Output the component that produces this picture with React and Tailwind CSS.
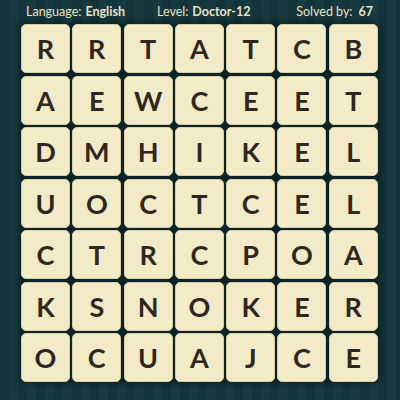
const rows = [
  'RRTATCB',
  'AEWCEET',
  'DMHIKEL',
  'UOCTCEL',
  'CTRCPOA',
  'KSNOKER',
  'OCUAJCE',
];

export default function App() {
  return (
    <div
      className="w-[400px] h-[400px] overflow-hidden bg-[repeating-linear-gradient(90deg,#13343a_0px,#13343a_9px,#173a3f_9px,#173a3f_18px)]"
      style={{ fontFamily: 'Lato, "Open Sans", sans-serif' }}
    >
      {/* HEADER */}
      <div className="h-[24px] flex items-center text-[12.5px] text-[#e9e3c3] pl-[26px] pr-[27px]">
        <div className="flex gap-[4px]">
          <span>Language:</span>
          <span className="font-bold">English</span>
        </div>
        <div className="flex gap-[4px] ml-[32px]">
          <span>Level:</span>
          <span className="font-bold">Doctor-12</span>
        </div>
        <div className="flex gap-[6px] ml-auto">
          <span>Solved by:</span>
          <span className="font-bold">67</span>
        </div>
      </div>

      {/* BOARD */}
      <div className="ml-[21px] w-fit bg-[#0b2226] rounded-[6px] shadow-[0_0_10px_rgba(0,0,0,0.55)]">
        <div className="grid grid-cols-7 gap-x-[2.3px] gap-y-[2.5px]">
          {rows.map((row, r) =>
            row.split('').map((ch, c) => (
              <Tile key={`${r}-${c}`} letter={ch} />
            ))
          )}
        </div>
      </div>
    </div>
  );
}

function Tile({ letter }) {
  return (
    <div className="w-[49px] h-[49px] rounded-[5px] bg-[#f3ebc7] border border-[#d9cfa3] flex items-center justify-center text-[27px] font-bold text-[#2f271e] leading-none">
      {letter}
    </div>
  );
}
